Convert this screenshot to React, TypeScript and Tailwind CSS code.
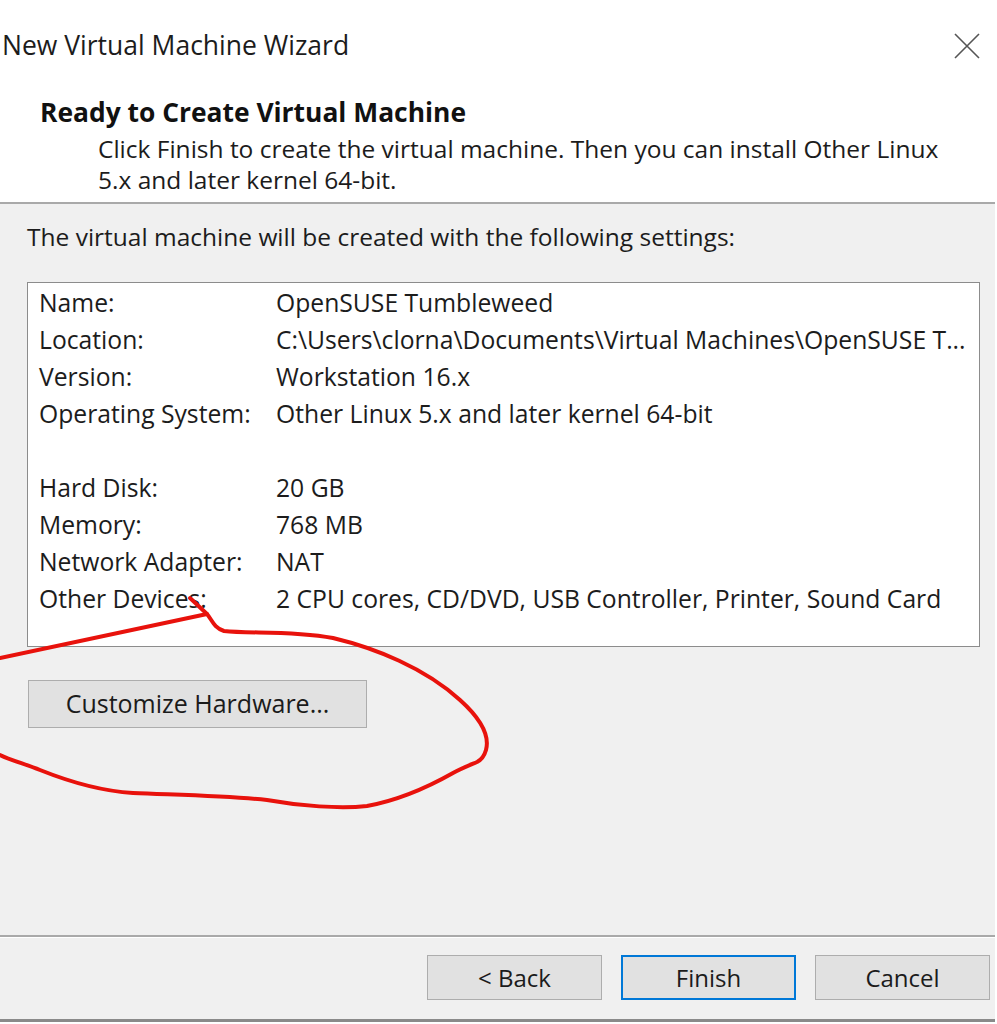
const font = { fontFamily: '"Open Sans", "Noto Sans", sans-serif' }

const settings: [string, string][] = [
  ['Name:', 'OpenSUSE Tumbleweed'],
  ['Location:', 'C:\\Users\\clorna\\Documents\\Virtual Machines\\OpenSUSE T...'],
  ['Version:', 'Workstation 16.x'],
  ['Operating System:', 'Other Linux 5.x and later kernel 64-bit'],
  ['', ''],
  ['Hard Disk:', '20 GB'],
  ['Memory:', '768 MB'],
  ['Network Adapter:', 'NAT'],
  ['Other Devices:', '2 CPU cores, CD/DVD, USB Controller, Printer, Sound Card'],
]

function WinButton({ label, primary = false, className = '' }: { label: string; primary?: boolean; className?: string }) {
  return (
    <button
      type="button"
      className={[
        'flex items-center justify-center bg-[#e1e1e1] text-[24px] text-[#1b1b1b]',
        primary ? 'border-2 border-[#0078d7]' : 'border border-[#adadad]',
        className,
      ].join(' ')}
    >
      {label}
    </button>
  )
}

export default function App() {
  return (
    <div className="relative h-[1024px] w-[997px] overflow-hidden bg-white" style={font}>
      {/* title bar */}
      <div className="flex h-[92px] items-center justify-between pl-[2px] pr-[16px]">
        <span className="text-[26.5px] text-[#1c1c1c]">New Virtual Machine Wizard</span>
        <svg width="28" height="28" viewBox="0 0 28 28" className="text-[#555]">
          <path d="M2 2 L26 26 M26 2 L2 26" stroke="currentColor" strokeWidth="1.6" fill="none" />
        </svg>
      </div>

      {/* header */}
      <div className="pb-[7px] pl-[40px] pt-[4px]">
        <p className="text-[26.4px] font-bold leading-[32px] text-[#111]">Ready to Create Virtual Machine</p>
        <p className="mt-[5px] w-[918px] pl-[58px] text-[24.5px] leading-[31px] text-[#1c1c1c]">
          Click Finish to create the virtual machine. Then you can install Other Linux 5.x and later kernel 64-bit.
        </p>
      </div>

      {/* body */}
      <div className="w-[995px] border-t-2 border-[#a9a9a9] bg-[#f0f0f0]">
        <div className="h-[731px] pl-[27px] pr-[17px] pt-[16px]">
          <p className="text-[24.5px] leading-[34px] text-[#1c1c1c]">
            The virtual machine will be created with the following settings:
          </p>
          <div className="mt-[28px] h-[365px] w-[953px] border border-[#8c8c8c] bg-white pl-[11px] pt-[1px]">
            {settings.map(([k, v], i) => (
              <div key={i} className="flex h-[37px] items-center text-[24.7px] text-[#1c1c1c]">
                <span className="w-[237px] shrink-0">{k}</span>
                <span className="whitespace-nowrap">{v}</span>
              </div>
            ))}
          </div>
          <WinButton label="Customize Hardware..." className="ml-[1px] mt-[33px] h-[48px] w-[339px] text-[25px]" />
        </div>

        {/* footer */}
        <div className="border-t-2 border-[#a9a9a9]">
          <div className="flex h-[82px] justify-end gap-[19px] border-t border-white bg-[#f0f0f0] pr-[5px] pt-[17px]">
            <WinButton label="< Back" className="h-[45px] w-[175px]" />
            <WinButton label="Finish" primary className="h-[45px] w-[175px]" />
            <WinButton label="Cancel" className="h-[45px] w-[175px]" />
          </div>
        </div>
      </div>
      <div className="h-[3px] w-[995px] bg-[#8a8a8a]" />

      {/* hand-drawn marker annotation */}
      <svg className="pointer-events-none absolute left-0 top-0" width="997" height="1024" viewBox="0 0 997 1024">
        <g stroke="#e8120c" strokeWidth="4" fill="none" strokeLinecap="round" strokeLinejoin="round">
          <path d="M0 658 L207 614 L190 598" />
          <path d="M207 614 C212 620 214 628 224 631 C250 634 290 630 333 638 C375 648 425 668 460 700 C480 718 490 735 486 750 C484 757 481 760 477 762 C470 765 460 769 453 773 C430 786 400 800 367 806 C340 809 300 806 267 800 C230 796 180 795 133 793 C100 791 70 782 40 770 C25 764 10 760 0 755" />
        </g>
      </svg>
    </div>
  )
}
